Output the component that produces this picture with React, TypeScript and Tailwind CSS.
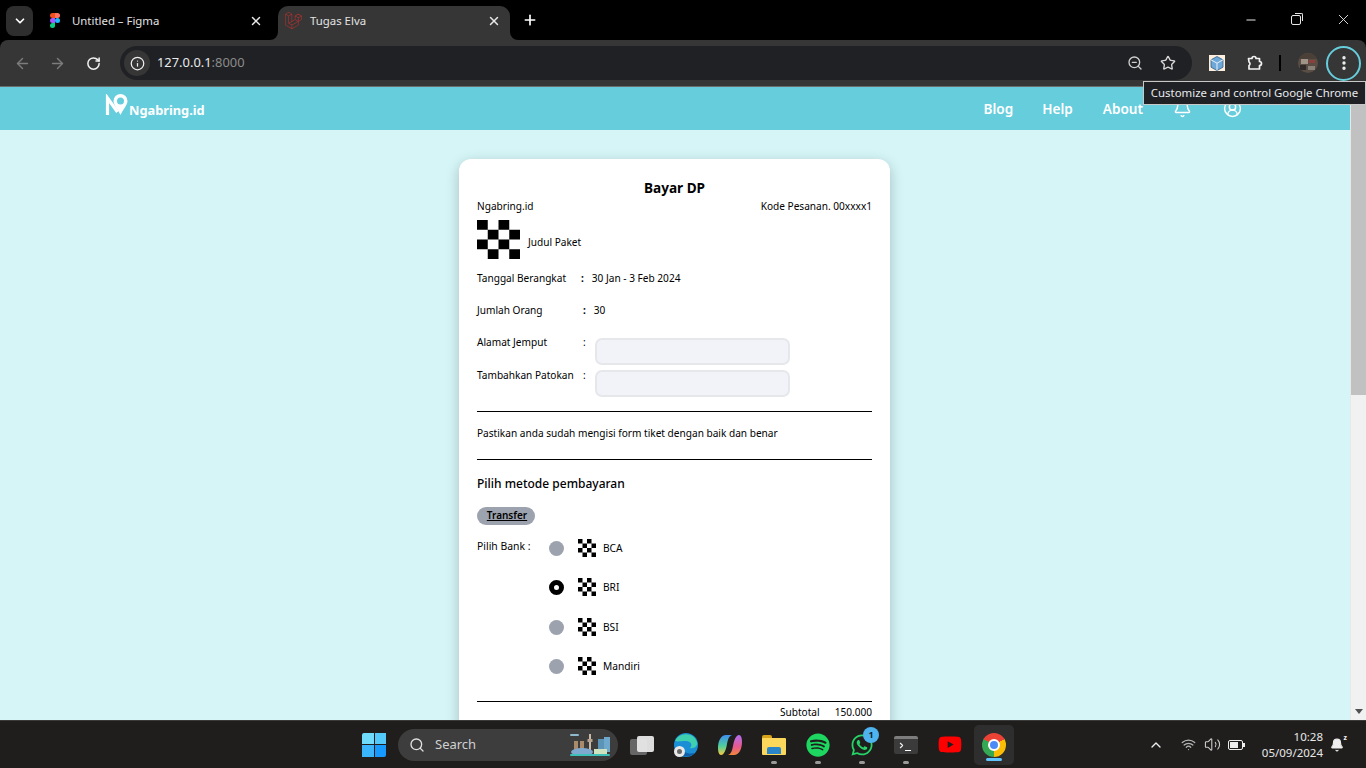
import { ArrowLeft, ArrowRight, RotateCw, Info, ZoomOut, Star, EllipsisVertical, ChevronDown, X, Plus, Minus, Bell, CircleUserRound, Search, ChevronUp, Wifi, Volume2 } from 'lucide-react';
import { FaWhatsapp, FaSpotify, FaYoutube, FaLaravel } from 'react-icons/fa';

const font = { fontFamily: '"Noto Sans", "Open Sans", sans-serif' };

function Checker({ w, h }: { w: number; h: number }) {
  return (
    <svg width={w} height={h} viewBox="0 0 4 4" preserveAspectRatio="none" className="shrink-0">
      <path d="M0 0h1v1H0zM2 0h1v1H2zM1 1h1v1H1zM3 1h1v1H3zM0 2h1v1H0zM2 2h1v1H2zM1 3h1v1H1zM3 3h1v1H3z" fill="#000" />
    </svg>
  );
}

function FigmaIcon() {
  return (
    <svg width="10" height="15" viewBox="0 0 10 15">
      <path d="M2.5 0H5v5H2.5a2.5 2.5 0 0 1 0-5z" fill="#f24e1e" />
      <path d="M5 0h2.5a2.5 2.5 0 0 1 0 5H5z" fill="#ff7262" />
      <path d="M2.5 5H5v5H2.5a2.5 2.5 0 0 1 0-5z" fill="#a259ff" />
      <circle cx="7.5" cy="7.5" r="2.5" fill="#1abcfe" />
      <path d="M2.5 10H5v2.5a2.5 2.5 0 1 1-2.5-2.5z" fill="#0acf83" />
    </svg>
  );
}

function Tabs() {
  return (
    <div className="h-10 bg-black flex items-end relative shrink-0">
      <div className="w-[27px] h-[30px] bg-[#2e2e2e] rounded-lg ml-[6px] mb-[4px] flex items-center justify-center shrink-0">
        <ChevronDown size={14} strokeWidth={3} color="#fff" />
      </div>
      <div className="w-[239px] h-[34px] flex items-center pl-[17px] pr-[9px] pb-[5px] shrink-0">
        <FigmaIcon />
        <span className="text-[11.4px] text-[#e3e3e3] ml-[12px] flex-1">Untitled – Figma</span>
        <X size={14} strokeWidth={2.5} color="#e8e8e8" />
      </div>
      <div className="w-[232px] h-[34px] bg-[#363636] rounded-t-[10px] flex items-center pl-[7px] pr-[9px] pb-[5px] ml-[6px] shrink-0 relative">
        <svg width="8" height="8" viewBox="0 0 8 8" className="absolute -left-[8px] bottom-0">
          <path d="M8 0v8H0a8 8 0 0 0 8-8z" fill="#363636" />
        </svg>
        <svg width="8" height="8" viewBox="0 0 8 8" className="absolute -right-[8px] bottom-0">
          <path d="M0 0v8h8a8 8 0 0 1-8-8z" fill="#363636" />
        </svg>
        <FaLaravel size={17} color="#c0302e" />
        <span className="text-[11.4px] text-[#e3e3e3] ml-[8px] flex-1">Tugas Elva</span>
        <X size={14} strokeWidth={2.5} color="#e8e8e8" />
      </div>
      <div className="ml-[12px] mb-[5px] h-[30px] flex items-center">
        <Plus size={16} strokeWidth={2.5} color="#fff" />
      </div>
      <div className="ml-auto flex items-center h-10 pb-[1px]">
        <div className="w-[46px] flex justify-center"><Minus size={14} color="#e8e8e8" /></div>
        <div className="w-[46px] flex justify-center pr-[2px]">
          <div className="relative w-[10px] h-[10px] border border-[#e8e8e8] rounded-[2px]">
            <div className="absolute -top-[3px] -right-[3px] w-[8px] h-[8px] border-t border-r border-[#e8e8e8] rounded-tr-[2px]" />
          </div>
        </div>
        <div className="w-[46px] flex justify-center"><X size={17} strokeWidth={1.3} color="#e8e8e8" /></div>
      </div>
    </div>
  );
}

function Toolbar() {
  return (
    <div className="h-[47px] bg-[#363636] rounded-t-[8px] border-b border-[#6b6b6b] flex items-center pl-[14px] pr-[5px] shrink-0">
      <ArrowLeft size={17} color="#7c7c7c" strokeWidth={2} />
      <ArrowRight size={17} color="#7c7c7c" strokeWidth={2} className="ml-[18px]" />
      <RotateCw size={15} color="#f2f2f2" strokeWidth={2.4} className="ml-[20px]" />
      <div className="ml-[19px] w-[1072px] h-[34px] bg-[#202124] rounded-full flex items-center pl-[4px] pr-[16px] shrink-0">
        <div className="w-[26px] h-[26px] rounded-full bg-[#363636] flex items-center justify-center">
          <Info size={15} color="#efefef" strokeWidth={2} />
        </div>
        <span className="ml-[7px] text-[12.9px] text-[#e8eaed]">127.0.0.1<span className="text-[#8b8b8b]">:8000</span></span>
        <ZoomOut size={16} color="#d0d0d0" strokeWidth={2} className="ml-auto" />
        <Star size={16} color="#d8d8d8" strokeWidth={2} className="ml-[17px]" />
      </div>
      <div className="ml-[17px] w-[16px] h-[16px] bg-[#fdeedd] flex items-center justify-center shrink-0">
        <svg width="14" height="15" viewBox="0 0 14 15">
          <path d="M7 .5l6 3.3v7.4l-6 3.3-6-3.3V3.8z" fill="#6ea8d8" stroke="#35608a" strokeWidth=".8" />
          <path d="M1 3.8l6 3.4 6-3.4M7 7.2v7" stroke="#e8f2fa" strokeWidth="1" fill="none" />
        </svg>
      </div>
      <svg width="18" height="18" viewBox="0 0 18 18" className="ml-[20px] shrink-0">
        <path d="M3.5 4.5H7a2 2 0 0 1 4 0h3.5v3a2 2 0 0 1 0 4v3.5H4v-3.5c1.3-.5 1.3-3 0-3.5z" fill="none" stroke="#f2f2f2" strokeWidth="1.7" strokeLinejoin="round" />
      </svg>
      <div className="ml-[16px] w-[2px] h-[16px] bg-black" />
      <svg width="20" height="20" viewBox="0 0 20 20" className="ml-[17px] shrink-0">
        <defs>
          <clipPath id="avatar"><circle cx="10" cy="10" r="10" /></clipPath>
        </defs>
        <g clipPath="url(#avatar)">
          <rect width="20" height="20" fill="#5a4e44" />
          <rect width="20" height="6" fill="#4a4038" />
          <rect x="3" y="6" width="7" height="5" fill="#a09488" />
          <rect x="11" y="7" width="6" height="3" fill="#8d3f3b" />
          <rect x="2" y="12" width="6" height="5" fill="#2e2b2a" />
          <rect x="10" y="13" width="7" height="4" fill="#8a8278" />
        </g>
      </svg>
      <div className="ml-[8px] w-[35px] h-[35px] rounded-full border-2 border-[#66cddc] flex items-center justify-center">
        <EllipsisVertical size={18} color="#f2f2f2" strokeWidth={2.5} />
      </div>
    </div>
  );
}

function SiteHeader() {
  return (
    <div className="h-[43px] bg-[#66cddc] flex items-center shrink-0 relative">
      <div className="ml-[105px] flex items-end mb-[3px]">
        <svg width="24" height="22" viewBox="0 0 24 22" className="mb-[4px] shrink-0">
          <path d="M2.5 21V4l10 14" stroke="#fff" strokeWidth="3.2" fill="none" />
          <path d="M15.5 0a7 7 0 0 1 7 7c0 4-4.5 8.5-7 14-2.5-5.5-7-10-7-14a7 7 0 0 1 7-7z" fill="#fff" />
          <circle cx="15.5" cy="7" r="3.5" fill="#66cddc" />
        </svg>
        <span className="text-[12.8px] font-bold text-white">Ngabring.id</span>
      </div>
      <div className="ml-auto flex items-center font-semibold text-[13.6px] text-white mr-[108px] pt-[1px]">
        <span>Blog</span>
        <span className="ml-[29px]">Help</span>
        <span className="ml-[30px]">About</span>
        <Bell size={19} strokeWidth={1.8} className="ml-[30px] -mt-[1px]" />
        <CircleUserRound size={19} strokeWidth={1.8} className="ml-[31px] -mt-[1px]" />
      </div>
    </div>
  );
}

function InfoRow({ label, value, labelWidth }: { label: string; value: string; labelWidth: string }) {
  return (
    <div className="flex items-center h-[16px] text-[10.1px] text-black">
      <span className={labelWidth}>{label}</span>
      <span className="font-bold">:</span>
      <span className="ml-[8px]">{value}</span>
    </div>
  );
}

function AddressRow({ label, marginTop, labelTop }: { label: string; marginTop: string; labelTop: string }) {
  return (
    <div className={`flex items-start ${marginTop}`}>
      <span className={`w-[106px] text-[10.1px] text-black leading-[14px] ${labelTop}`}>{label}</span>
      <span className={`text-[10.1px] leading-[14px] ${labelTop}`}>:</span>
      <input className="ml-[9px] w-[195px] h-[27px] rounded-[7px] bg-[#f1f3f9] border-2 border-[#e5e7eb]" />
    </div>
  );
}

function BankRow({ name, selected, mt }: { name: string; selected?: boolean; mt: string }) {
  return (
    <div className={`flex items-center h-[18px] ${mt}`}>
      {selected ? (
        <div className="w-[15px] h-[15px] mb-[2px] rounded-full border-[5px] border-black bg-white shrink-0" />
      ) : (
        <div className="w-[15px] h-[15px] mb-[2px] rounded-full bg-[#9ca3af] shrink-0" />
      )}
      <div className="ml-[14px] mb-[2px] flex"><Checker w={18} h={18} /></div>
      <span className="ml-[7px] text-[10.2px] text-black">{name}</span>
    </div>
  );
}

function Card() {
  return (
    <div className="w-[431px] ml-[459px] mt-[29px] bg-white rounded-xl shadow-[0_4px_14px_rgba(0,0,0,0.22)] pt-[20px] px-[18px] pb-[24px] shrink-0">
      <h1 className="text-center text-[13.6px] font-bold text-black leading-[18px]">Bayar DP</h1>
      <div className="flex justify-between text-[10.1px] text-black leading-[14px] mt-[2px]">
        <span>Ngabring.id</span>
        <span>Kode Pesanan. 00xxxx1</span>
      </div>
      <div className="flex items-center mt-[7px]">
        <Checker w={43} h={39} />
        <span className="ml-[8px] text-[10.1px] text-black mt-[6px]">Judul Paket</span>
      </div>
      <div className="mt-[12px]"><InfoRow label="Tanggal Berangkat" value="30 Jan - 3 Feb 2024" labelWidth="w-[104px]" /></div>
      <div className="mt-[16px]"><InfoRow label="Jumlah Orang" value="30" labelWidth="w-[106px]" /></div>
      <AddressRow label="Alamat Jemput" marginTop="mt-[19px]" labelTop="-mt-[3px]" />
      <AddressRow label="Tambahkan Patokan" marginTop="mt-[5px]" labelTop="-mt-[2px]" />
      <div className="border-t border-black mt-[14px]" />
      <p className="text-[10.1px] text-black mt-[14px] leading-[14px]">Pastikan anda sudah mengisi form tiket dengan baik dan benar</p>
      <div className="border-t border-black mt-[19px]" />
      <h2 className="text-[12px] font-medium text-black mt-[15px] leading-[18px]">Pilih metode pembayaran</h2>
      <div className="mt-[14px] w-[58px] h-[18px] rounded-full bg-[#9ca3af] flex items-center justify-center pl-[2px] pb-[1px] text-[10px] font-semibold text-black underline">Transfer</div>
      <div className="flex items-start mt-[15px]">
        <span className="w-[72px] text-[10.4px] text-black leading-[14px] -mt-[1px]">Pilih Bank :</span>
        <div>
          <BankRow name="BCA" mt="mt-0" />
          <BankRow name="BRI" selected mt="mt-[21px]" />
          <BankRow name="BSI" mt="mt-[22px]" />
          <BankRow name="Mandiri" mt="mt-[21px]" />
        </div>
      </div>
      <div className="border-t border-black mt-[25px]" />
      <div className="flex justify-end text-[10.1px] text-black leading-[14px] mt-[3px]">
        <span>Subtotal</span>
        <span className="ml-[15px]">150.000</span>
      </div>
    </div>
  );
}

function Scrollbar() {
  return (
    <div className="w-[16px] bg-[#f1f1f1] flex flex-col shrink-0 border-l border-[#e8e8e8]">
      <div className="h-[17px] flex items-center justify-center">
        <div className="w-0 h-0 border-x-[4px] border-x-transparent border-b-[5px] border-b-[#505050]" />
      </div>
      <div className="h-[291px] bg-[#c1c1c1] shrink-0" />
      <div className="mt-auto h-[17px] flex items-center justify-center">
        <div className="w-0 h-0 border-x-[4px] border-x-transparent border-t-[5px] border-t-[#505050]" />
      </div>
    </div>
  );
}

function WinLogo() {
  return (
    <div className="grid grid-cols-2 gap-[1px] w-[24px] h-[24px]">
      <div className="bg-[#6fdcfb] rounded-tl-[2px]" />
      <div className="bg-[#52c8fb]" />
      <div className="bg-[#3ab4fb]" />
      <div className="bg-[#179aff] rounded-br-[2px]" />
    </div>
  );
}

function CopilotIcon() {
  return (
    <svg width="24" height="24" viewBox="0 0 24 24">
      <defs>
        <linearGradient id="copA" x1="0" y1="0" x2="0" y2="1">
          <stop offset="0" stopColor="#3f8ef0" />
          <stop offset=".55" stopColor="#4ecf9e" />
          <stop offset="1" stopColor="#f6c93f" />
        </linearGradient>
        <linearGradient id="copB" x1="0" y1="0" x2="0" y2="1">
          <stop offset="0" stopColor="#b26cf0" />
          <stop offset=".6" stopColor="#e8598a" />
          <stop offset="1" stopColor="#f3883b" />
        </linearGradient>
      </defs>
      <path d="M8 2h6c-3 1-4 4-5 9-1 6-3 11-6 11-2 0-3-3-3-7C0 8 3 2 8 2z" fill="url(#copA)" />
      <path d="M16 22h-6c3-1 4-4 5-9 1-6 3-11 6-11 2 0 3 3 3 7 0 7-3 13-8 13z" fill="url(#copB)" />
    </svg>
  );
}

function TaskDot({ active }: { active?: boolean }) {
  return <div className={active ? 'absolute bottom-[4px] left-1/2 -translate-x-1/2 w-[16px] h-[3px] rounded-full bg-[#60c5ff]' : 'absolute bottom-[4px] left-1/2 -translate-x-1/2 w-[6px] h-[3px] rounded-full bg-[#9a9a9a]'} />;
}

function Taskbar() {
  return (
    <div className="h-[48px] bg-[#1f1e1d] border-t border-[#3a3a3a] flex items-center shrink-0 relative">
      <div className="ml-[362px]"><WinLogo /></div>
      <div className="ml-[12px] w-[220px] h-[32px] rounded-full bg-[#3d3d3d] flex items-center pl-[11px] shrink-0">
        <Search size={16} color="#e0e0e0" strokeWidth={2} />
        <span className="ml-[10px] text-[13px] text-[#d0d0d0]">Search</span>
        <svg width="44" height="26" viewBox="0 0 44 26" className="ml-auto mr-[6px]">
          <rect x="2" y="2" width="9" height="2" rx="1" fill="#8fb8cc" />
          <rect x="6" y="9" width="4" height="10" fill="#a98a6a" />
          <rect x="12" y="9" width="4" height="10" fill="#a98a6a" />
          <rect x="21" y="2" width="2" height="18" fill="#c9b9a6" />
          <rect x="19.5" y="7" width="5" height="3" fill="#b7a390" />
          <rect x="30" y="7" width="6" height="13" fill="#5c94b8" />
          <rect x="36" y="5" width="6" height="15" fill="#6ea8cc" />
          <ellipse cx="14" cy="20" rx="11" ry="4" fill="#7fa9cf" />
          <rect x="26" y="17" width="13" height="5" fill="#cfe2c0" />
          <rect x="2" y="22" width="40" height="2" rx="1" fill="#3ec0b8" />
        </svg>
      </div>
      <div className="ml-[12px] w-[24px] relative h-[24px]">
        <div className="absolute left-0 bottom-[2px] w-[17px] h-[16px] bg-[#666] rounded-[2px]" />
        <div className="absolute right-0 top-[3px] w-[17px] h-[16px] bg-[#e8e8e8] rounded-[2px] opacity-95" />
      </div>
      <div className="ml-[20px] w-[24px] h-[24px] relative">
        <svg width="24" height="24" viewBox="0 0 24 24">
          <circle cx="12" cy="12" r="12" fill="#1a8fd6" />
          <path d="M1 8a12 12 0 0 1 22 1c1 4-3 7-7 6 3-3 1-7-4-7-5 0-9 1-11 0z" fill="#3fd0b0" />
          <path d="M4 20c4 4 12 5 17 0-5 1-11 1-14-6z" fill="#0f5fa8" />
        </svg>
        <div className="absolute left-0 bottom-0 w-[11px] h-[11px] rounded-full bg-[#e8e8e8] flex items-center justify-center">
          <div className="w-[5px] h-[5px] rounded-full bg-[#666]" />
        </div>
      </div>
      <div className="ml-[20px] w-[24px] h-[24px]"><CopilotIcon /></div>
      <div className="ml-[20px] w-[24px] h-[47px] relative flex items-center">
        <div className="w-[24px] h-[20px] relative">
          <div className="absolute top-0 left-0 w-[10px] h-[5px] bg-[#d9a21b] rounded-t-[2px]" />
          <div className="absolute top-[3px] left-0 w-[24px] h-[17px] bg-[#fbd75b] rounded-[1px]" />
          <div className="absolute bottom-[1px] left-[5px] w-[14px] h-[7px] bg-[#2a86c9] rounded-t-[2px]" />
        </div>
        <TaskDot />
      </div>
      <div className="ml-[20px] w-[24px] h-[47px] relative flex items-center">
        <FaSpotify size={24} color="#1ed760" />
        <TaskDot />
      </div>
      <div className="ml-[20px] w-[24px] h-[47px] relative flex items-center">
        <FaWhatsapp size={24} color="#25d366" />
        <div className="absolute top-[6px] -right-[5px] w-[16px] h-[16px] rounded-full bg-[#4fb3ee] text-[9px] font-bold text-[#10222e] flex items-center justify-center">1</div>
        <TaskDot />
      </div>
      <div className="ml-[20px] w-[24px] h-[47px] relative flex items-center">
        <div className="w-[24px] h-[18px] rounded-[2px] bg-[#3b3b3b] border-t-[3px] border-[#7d7d7d] relative">
          <ChevronUp size={9} color="#eee" strokeWidth={3} className="absolute left-[3px] top-[2px] rotate-90" />
          <div className="absolute left-[11px] bottom-[3px] w-[6px] h-[1px] bg-white" />
        </div>
        <TaskDot />
      </div>
      <div className="ml-[20px] w-[24px] h-[47px] relative flex items-center">
        <FaYoutube size={25} color="#f00" />
      </div>
      <div className="ml-[12px] w-[40px] h-[40px] rounded-[5px] bg-[#2e2e2e] relative flex items-center justify-center">
        <div className="w-[24px] h-[24px] rounded-full bg-[conic-gradient(from_-60deg,#ea4335_0_120deg,#fbbc05_120deg_240deg,#34a853_240deg_360deg)] flex items-center justify-center">
          <div className="w-[12px] h-[12px] rounded-full bg-[#4c8bf5] border-2 border-white" />
        </div>
        <TaskDot active />
      </div>
      <div className="ml-auto flex items-center pr-[22px] text-white">
        <ChevronUp size={16} color="#eee" strokeWidth={2} />
        <Wifi size={15} color="#b5b5b5" strokeWidth={2} className="ml-[17px]" />
        <Volume2 size={17} color="#cfcfcf" strokeWidth={1.5} className="ml-[8px]" />
        <div className="ml-[7px] w-[15px] h-[10px] border border-[#eee] rounded-[2px] p-[1px] relative">
          <div className="w-[8px] h-full bg-[#eee]" />
          <div className="absolute -right-[3px] top-[2px] w-[2px] h-[4px] bg-[#eee]" />
        </div>
        <div className="ml-[19px] text-right text-[11.5px] leading-[16px] text-[#e8e8e8]">
          <div>10:28</div>
          <div>05/09/2024</div>
        </div>
        <div className="ml-[7px] relative">
          <Bell size={14} color="#eee" fill="#eee" strokeWidth={2} />
          <span className="absolute -top-[5px] -right-[3px] text-[7px] font-bold text-[#eee]">z</span>
        </div>
      </div>
    </div>
  );
}

export default function App() {
  return (
    <div className="h-screen w-full flex flex-col overflow-hidden bg-black relative" style={font}>
      <Tabs />
      <Toolbar />
      <div className="flex-1 min-h-0 flex">
        <div className="flex-1 min-w-0 bg-[#d5f5f7] overflow-hidden flex flex-col">
          <SiteHeader />
          <Card />
        </div>
        <Scrollbar />
      </div>
      <Taskbar />
      <div className="absolute top-[81px] left-[1143px] w-[223px] h-[24px] bg-[#202124] border border-[#c8c8c8] flex items-center justify-center text-[11.4px] text-[#e8eaed] whitespace-nowrap">
        Customize and control Google Chrome
      </div>
    </div>
  );
}
